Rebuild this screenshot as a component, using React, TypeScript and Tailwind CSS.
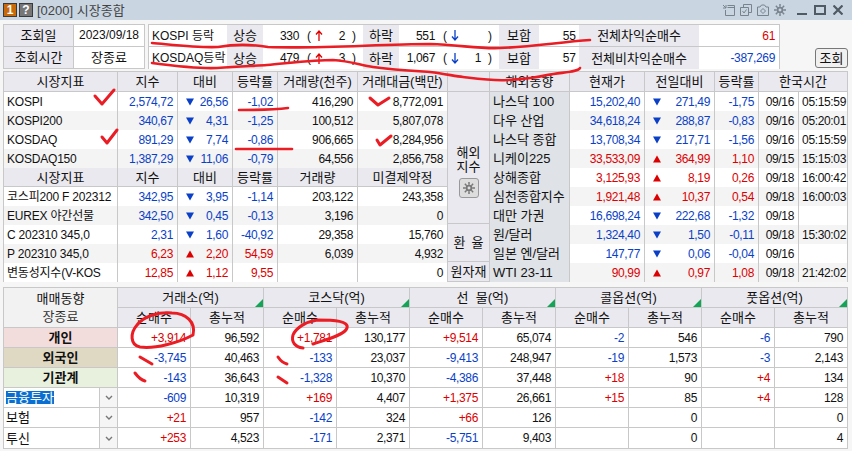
const BLUE = "text-[#0a3fc8]";
const RED = "text-[#dc0000]";

type Mark = "up" | "down" | null;

function Tri({ dir }: { dir: "up" | "down" }) {
  return (
    <svg width="8" height="8" viewBox="0 0 8 8" className={dir === "up" ? "fill-[#dc0000]" : "fill-[#0a3fc8]"}>
      {dir === "up" ? <path d="M4 0.5 L8 7.5 L0 7.5 Z" /> : <path d="M0 0.5 L8 0.5 L4 7.5 Z" />}
    </svg>
  );
}

function Arrow({ dir }: { dir: "up" | "down" }) {
  return (
    <svg width="8" height="11" viewBox="0 0 8 11" fill="none" stroke={dir === "up" ? "#dc0000" : "#0a3fc8"} strokeWidth="1.3">
      {dir === "up" ? <path d="M4 11 V1 M1 4.5 L4 1 L7 4.5" /> : <path d="M4 0 V10 M1 6.5 L4 10 L7 6.5" />}
    </svg>
  );
}

function Gear({ size, stroke }: { size: number; stroke: string }) {
  return (
    <svg width={size} height={size} viewBox="0 0 13 13" fill="none" stroke={stroke} strokeWidth="2">
      <circle cx="6.5" cy="6.5" r="2.6" />
      <path strokeWidth="1.6" d="M6.5 0 V3 M6.5 10 V13 M0 6.5 H3 M10 6.5 H13 M2 2 L4 4 M9 9 L11 11 M11 2 L9 4 M4 9 L2 11" />
    </svg>
  );
}

function Num({ children, className = "" }: { children?: React.ReactNode; className?: string }) {
  return (
    <div className={`flex items-center justify-end h-full min-w-0 border-r border-[#c8c8c8] pr-1 text-[12px] tracking-[-0.35px] whitespace-nowrap overflow-hidden ${className}`}>
      {children}
    </div>
  );
}

function Head({ children, className = "" }: { children?: React.ReactNode; className?: string }) {
  return (
    <div className={`flex items-center justify-center h-full border-r border-[#c8c8c8] bg-[#e9e9ef] whitespace-nowrap overflow-hidden ${className}`}>
      {children}
    </div>
  );
}

function Change({ mark, value }: { mark: Mark; value: string }) {
  const color = mark === "up" ? RED : BLUE;
  return (
    <div className={`flex items-center justify-between h-full border-r border-[#c8c8c8] pl-[8px] pr-1 text-[12px] tracking-[-0.35px] ${color}`}>
      {mark ? <Tri dir={mark} /> : <span />}
      <span>{value}</span>
    </div>
  );
}

const leftCols = "grid grid-cols-[114px_60px_55px_45px_80px_90px]";
const rightCols = "grid grid-cols-[80px_75px_70px_44px_40px_49px]";

const indexRows = [
  ["KOSPI", "2,574,72", "down", "26,56", "-1,02", "416,290", "8,772,091"],
  ["KOSPI200", "340,67", "down", "4,31", "-1,25", "100,512", "5,807,078"],
  ["KOSDAQ", "891,29", "down", "7,74", "-0,86", "906,665", "8,284,956"],
  ["KOSDAQ150", "1,387,29", "down", "11,06", "-0,79", "64,556", "2,856,758"],
];

const futureRows = [
  ["코스피200 F 202312", "342,95", "down", "3,95", "-1,14", "203,122", "243,358"],
  ["EUREX 야간선물", "342,50", "down", "0,45", "-0,13", "3,196", "0"],
  ["C 202310 345,0", "2,31", "down", "1,60", "-40,92", "29,358", "15,760"],
  ["P 202310 345,0", "6,23", "up", "2,20", "54,59", "6,039", "4,932"],
  ["변동성지수(V-KOS", "12,85", "up", "1,12", "9,55", "", "0"],
];

const worldRows = [
  ["나스닥 100", "15,202,40", "down", "271,49", "-1,75", "09/16", "05:15:59"],
  ["다우 산업", "34,618,24", "down", "288,87", "-0,83", "09/16", "05:20:01"],
  ["나스닥 종합", "13,708,34", "down", "217,71", "-1,56", "09/16", "05:15:59"],
  ["니케이225", "33,533,09", "up", "364,99", "1,10", "09/15", "15:15:03"],
  ["상해종합", "3,125,93", "up", "8,19", "0,26", "09/18", "16:00:42"],
  ["심천종합지수", "1,921,48", "up", "10,37", "0,54", "09/18", "16:00:03"],
  ["대만 가권", "16,698,24", "down", "222,68", "-1,32", "09/18", ""],
  ["원/달러", "1,324,40", "down", "1,50", "-0,11", "09/18", "15:30:02"],
  ["일본 엔/달러", "147,77", "down", "0,06", "-0,04", "09/16", ""],
  ["WTI 23-11", "90,99", "up", "0,97", "1,08", "09/18", "21:42:02"],
];

const tradeRows = [
  ["+3,914", "96,592", "+1,781", "130,177", "+9,514", "65,074", "-2", "546", "-6", "790"],
  ["-3,745", "40,463", "-133", "23,037", "-9,413", "248,947", "-19", "1,573", "-3", "2,143"],
  ["-143", "36,643", "-1,328", "10,370", "-4,386", "37,448", "+18", "90", "+4", "134"],
  ["-609", "10,319", "+169", "4,407", "+1,375", "26,661", "+15", "85", "+4", "128"],
  ["+21", "957", "-142", "324", "+66", "126", "", "0", "", "0"],
  ["+253", "4,523", "-171", "2,371", "-5,751", "9,403", "", "0", "", "4"],
];

function signColor(v: string) {
  return v.startsWith("+") ? RED : BLUE;
}

function IndexRow({ row, odd }: { row: string[]; odd: boolean }) {
  const color = row[2] === "up" ? RED : BLUE;
  return (
    <div className={`${leftCols} h-[19px] ${odd ? "bg-[#f4f4f4]" : "bg-white"}`}>
      <div className="flex items-center h-full pl-[3px] border-r border-[#c8c8c8] whitespace-nowrap text-[12px] tracking-[-0.2px]">{row[0]}</div>
      <Num className={color}>{row[1]}</Num>
      <Change mark={row[2] as Mark} value={row[3]} />
      <Num className={color}>{row[4]}</Num>
      <Num>{row[5]}</Num>
      <Num>{row[6]}</Num>
    </div>
  );
}

function LeftHead({ labels, tall }: { labels: string[]; tall?: boolean }) {
  return (
    <div className={`${leftCols} ${tall ? "h-[20px]" : "h-[19px]"} border-b border-[#c8c8c8]`}>
      {labels.map((l, i) => (
        <Head key={i}>{l}</Head>
      ))}
    </div>
  );
}

function TopValue({ num, arrow, sub }: { num: string; arrow: "up" | "down"; sub: string }) {
  return (
    <div className="flex items-center h-full bg-white text-[12px] tracking-[-0.35px]">
      <span className="w-[36px] text-right">{num}</span>
      <span className="ml-[8px] w-[6px]">(</span>
      <span className="flex justify-center w-[12px]"><Arrow dir={arrow} /></span>
      <span className="w-[20px] text-right">{sub}</span>
      <span className="ml-[7px]">)</span>
    </div>
  );
}

function TopRow({ name, up, upSub, down, downSub, flat, label, value, valueColor, last }: {
  name: string; up: string; upSub: string; down: string; downSub: string; flat: string; label: string; value: string; valueColor: string; last?: boolean;
}) {
  return (
    <div className={`grid grid-cols-[78px_36px_100px_36px_100px_40px_40px_120px_80px] h-[22px] ${last ? "" : "border-b border-[#c8c8c8]"}`}>
      <div className="flex items-center pl-[3px] bg-white whitespace-nowrap text-[12px]">{name}</div>
      <div className="flex items-center justify-center bg-[#e9e9ef]">상승</div>
      <TopValue num={up} arrow="up" sub={upSub} />
      <div className="flex items-center justify-center bg-[#e9e9ef]">하락</div>
      <TopValue num={down} arrow="down" sub={downSub} />
      <div className="flex items-center justify-center bg-[#e9e9ef]">보합</div>
      <div className="flex items-center justify-end pr-[3px] bg-white text-[12px]">{flat}</div>
      <div className="flex items-center justify-center bg-[#e9e9ef]">{label}</div>
      <div className={`flex items-center justify-end pr-[4px] bg-white text-[12px] tracking-[-0.35px] ${valueColor}`}>{value}</div>
    </div>
  );
}

function Corner() {
  return <span className="absolute right-0 bottom-0 w-0 h-0 border-l-[8px] border-l-transparent border-b-[8px] border-b-[#12a557]" />;
}

function SelectRow({ label, selected }: { label: string; selected?: boolean }) {
  return (
    <div className="flex items-center h-full border-r border-[#c8c8c8] bg-white">
      <div className="flex items-center flex-1 pl-[2px] h-full">
        <span className={selected ? "bg-[#0a6fd0] text-white leading-[13px]" : ""}>{label}</span>
      </div>
      <div className="flex items-center justify-center w-[18px] h-full border-l border-[#c8c8c8] bg-[#f5f5f5]">
        <svg width="8" height="5" viewBox="0 0 8 5" fill="none" stroke="#777" strokeWidth="1.4"><path d="M1 1 L4 4 L7 1" /></svg>
      </div>
    </div>
  );
}

function Marks() {
  return (
    <svg className="absolute left-0 top-0 pointer-events-none" width="852" height="451" fill="none" stroke="#ea1c24" strokeWidth="2.6" strokeLinecap="round" strokeLinejoin="round">
      <path d="M152 43 C175 45 200 48 218 47 C235 44 250 44 268 47 C320 49 380 44 430 44 C460 45 480 49 500 48 C530 47 560 42 590 40" />
      <path d="M152 63 C175 66 200 69 217 68 C240 66 255 66 267 65 C290 63 315 60 333 60 C350 61 360 65 373 67 C395 70 415 71 430 72 C445 74 455 76 463 77 C480 79 495 81 507 80 C525 79 535 78 547 75 C565 72 578 72 580 68" />
      <path strokeWidth="3" d="M95 96 L102 104 L114 90" />
      <path d="M239 110 C255 110 272 110 288 108" />
      <path strokeWidth="3" d="M370 98 L378 105 L389 98" />
      <path strokeWidth="3" d="M102 137 L107 143 L117 130" />
      <path d="M236 149 L292 149" />
      <path strokeWidth="3" d="M377 140 L380 145 L391 136" />
      <path strokeWidth="3" d="M193 335 C196 322 186 313 172 313 C158 312 144 316 137 325 C130 333 130 345 140 347 C155 349 178 343 193 335" />
      <path strokeWidth="3" d="M313 344 C325 340 345 335 347 328 C349 321 335 320 317 320 C305 322 296 328 293 335 C291 342 295 347 303 348" />
      <path strokeWidth="3" d="M140 357 L152 364" />
      <path strokeWidth="3" d="M278 357 C280 360 283 363 287 364" />
      <path strokeWidth="3" d="M135 373 C138 377 141 380 145 381" />
      <path strokeWidth="3" d="M278 377 L287 383" />
    </svg>
  );
}

export default function App() {
  return (
    <div className="relative w-[852px] h-[451px] overflow-hidden bg-[#f6f6f6] text-[13px] leading-none text-[#111] font-['Liberation_Sans','Noto_Sans_CJK_KR',sans-serif]">
      {/* Title bar */}
      <div className="flex items-center h-[20px] pl-[3px] pr-[9px] bg-[#c9d6e2]">
        <span className="flex items-center justify-center w-[14px] h-[14px] bg-[#c8690a] border border-[#3a3a3a] text-white text-[12px] font-bold">1</span>
        <span className="flex items-center justify-center w-[14px] h-[14px] ml-[2px] bg-[#777] border border-[#3a3a3a] text-white text-[12px] font-bold">?</span>
        <span className="ml-[4px] text-[#444]">[0200] 시장종합</span>
        <div className="flex items-center gap-[5px] ml-auto">
          <svg width="12" height="12" viewBox="0 0 12 12" fill="none" stroke="#78838e"><path d="M0 1 L3 4 M3 1 V4 H0 M4.5 1.5 H11.5 V11.5 H2.5 V6 M4.5 3.5 H11.5" /></svg>
          <svg width="12" height="12" viewBox="0 0 12 12" fill="none" stroke="#78838e"><path d="M3.5 3 V0.5 H11.5 V8.5 H9 M0.5 3.5 H8.5 V11.5 H0.5 Z M2.5 7 L4 9 L6.5 5.5" /></svg>
          <svg width="12" height="12" viewBox="0 0 12 12" fill="none" stroke="#78838e"><path d="M0.5 3 H3 L4.5 1 H7.5 L9 3 H11.5 V11.5 H0.5 Z M6 4.5 L8.5 7 L6 9.5 L3.5 7 Z" /></svg>
          <Gear size={12} stroke="#78838e" />
          <svg className="ml-[6px]" width="10" height="10" viewBox="0 0 10 10" fill="none" stroke="#4f5a64" strokeWidth="2"><path d="M0 9 H10" /></svg>
          <svg className="ml-[2px]" width="12" height="10" viewBox="0 0 12 10" fill="none" stroke="#4f5a64" strokeWidth="2"><rect x="1" y="1" width="10" height="8" /></svg>
          <svg className="ml-[2px]" width="10" height="10" viewBox="0 0 10 10" fill="none" stroke="#4f5a64" strokeWidth="2.2"><path d="M0.5 0.5 L9.5 9.5 M9.5 0.5 L0.5 9.5" /></svg>
        </div>
      </div>

      {/* Query summary */}
      <div className="flex items-start h-[44px] mt-[4px] ml-[3px]">
        <div className="grid grid-cols-[70px_70px] grid-rows-2 w-[142px] h-[45px] border border-[#c8c8c8] text-[13px]">
          <div className="flex items-center justify-center border-r border-b border-[#c8c8c8] bg-[#e9e9ef]">조회일</div>
          <div className="flex items-center justify-center border-b border-[#c8c8c8] bg-white text-[12px]">2023/09/18</div>
          <div className="flex items-center justify-center border-r border-[#c8c8c8] bg-[#e9e9ef]">조회시간</div>
          <div className="flex items-center justify-center bg-white">장종료</div>
        </div>
        <div className="ml-[3px] w-[632px] h-[45px] border border-[#c8c8c8]">
          <TopRow name="KOSPI 등락" up="330" upSub="2" down="551" downSub="" flat="55" label="전체차익순매수" value="61" valueColor={RED} />
          <TopRow name="KOSDAQ등락" up="479" upSub="3" down="1,067" downSub="1" flat="57" label="전체비차익순매수" value="-387,269" valueColor={BLUE} last />
        </div>
        <button className="flex items-center justify-center w-[33px] h-[20px] ml-[35px] mt-[24px] rounded-[3px] border border-[#777] bg-[#f0f0f0] text-[13px]">조회</button>
      </div>

      {/* Index table */}
      <div className="flex w-[845px] h-[211px] mt-[3px] ml-[3px] border-l border-t border-b border-[#c8c8c8]">
        <div className="w-[444px]">
          <LeftHead tall labels={["시장지표", "지수", "대비", "등락률", "거래량(천주)", "거래대금(백만)"]} />
          {indexRows.map((r, i) => (
            <IndexRow key={i} row={r} odd={i % 2 === 1} />
          ))}
          <LeftHead labels={["시장지표", "지수", "대비", "등락률", "거래량", "미결제약정"]} />
          {futureRows.map((r, i) => (
            <IndexRow key={i} row={r} odd={i % 2 === 1} />
          ))}
        </div>

        {/* Section labels */}
        <div className="flex flex-col w-[42px] border-r border-[#c8c8c8] bg-[#e9e9ef]">
          <div className="h-[20px] border-b border-[#c8c8c8]" />
          <div className="flex flex-col items-center justify-center h-[133px] pt-[28px] border-b border-[#c8c8c8] leading-[14px]">
            <span>해외</span>
            <span>지수</span>
            <span className="flex items-center justify-center w-[20px] h-[20px] mt-[4px] rounded-[3px] border border-[#999] bg-[#ddd]">
              <Gear size={12} stroke="#777" />
            </span>
          </div>
          <div className="flex items-center justify-center h-[38px] border-b border-[#c8c8c8] whitespace-nowrap tracking-[6px] pl-[6px]">환율</div>
          <div className="flex items-center justify-center h-[19px] whitespace-nowrap">원자재</div>
        </div>

        <div className="w-[358px]">
          <div className={`${rightCols} h-[20px] border-b border-[#c8c8c8]`}>
            <Head>해외동향</Head>
            <Head>현재가</Head>
            <Head>전일대비</Head>
            <Head>등락률</Head>
            <Head className="col-span-2">한국시간</Head>
          </div>
          {worldRows.map((r, i) => {
            const color = r[2] === "up" ? RED : BLUE;
            return (
              <div key={i} className={`${rightCols} h-[19px] ${i % 2 === 1 ? "bg-[#f4f4f4]" : "bg-white"}`}>
                <div className="flex items-center h-full pl-[3px] border-r border-[#c8c8c8] bg-[#dfe2e6] whitespace-nowrap">{r[0]}</div>
                <Num className={color}>{r[1]}</Num>
                <Change mark={r[2] as Mark} value={r[3]} />
                <Num className={color}>{r[4]}</Num>
                <Num>{r[5]}</Num>
                <Num className="pr-[1px]">{r[6]}</Num>
              </div>
            );
          })}
        </div>
      </div>

      {/* Investor flows */}
      <div className="w-[845px] h-[162px] mt-[5px] ml-[3px] border-l border-t border-b border-[#c8c8c8]">
        <div className="grid grid-cols-[114px_1fr] h-[40px]">
          <div className="flex flex-col items-center justify-center gap-[5px] border-r border-b border-[#c8c8c8] bg-[#f2f2f2]">
            <span>매매동향</span>
            <span className="text-[#333]">장종료</span>
          </div>
          <div className="grid grid-cols-5 grid-rows-[20px_20px]">
            {["거래소(억)", "코스닥(억)", "선  물(억)", "콜옵션(억)", "풋옵션(억)"].map((t) => (
              <div key={t} className="relative flex items-center justify-center border-r border-b border-[#c8c8c8] bg-[#e9e9ef] whitespace-pre">
                {t}
                <Corner />
              </div>
            ))}
            {[0, 1, 2, 3, 4].map((i) => (
              <div key={i} className="grid grid-cols-2 border-b border-[#c8c8c8] bg-[#e9e9ef]">
                <div className="flex items-center justify-center border-r border-[#c8c8c8]">순매수</div>
                <div className="flex items-center justify-center border-r border-[#c8c8c8]">총누적</div>
              </div>
            ))}
          </div>
        </div>
        {tradeRows.map((r, i) => (
          <div key={i} className={`grid grid-cols-[114px_repeat(10,73px)] h-[20px] ${i < 5 ? "border-b border-[#c8c8c8]" : ""} bg-white`}>
            {i === 0 && <div className="flex items-center justify-center border-r border-[#c8c8c8] bg-[#f3dcdc] font-bold">개인</div>}
            {i === 1 && <div className="flex items-center justify-center border-r border-[#c8c8c8] bg-[#dfd9c4] font-bold">외국인</div>}
            {i === 2 && <div className="flex items-center justify-center border-r border-[#c8c8c8] bg-[#e8f0de] font-bold">기관계</div>}
            {i === 3 && <SelectRow label="금융투자" selected />}
            {i === 4 && <SelectRow label="보험" />}
            {i === 5 && <SelectRow label="투신" />}
            {r.map((v, j) => (
              <Num key={j} className={j % 2 === 0 ? signColor(v) : ""}>{v}</Num>
            ))}
          </div>
        ))}
      </div>

      <Marks />
    </div>
  );
}
